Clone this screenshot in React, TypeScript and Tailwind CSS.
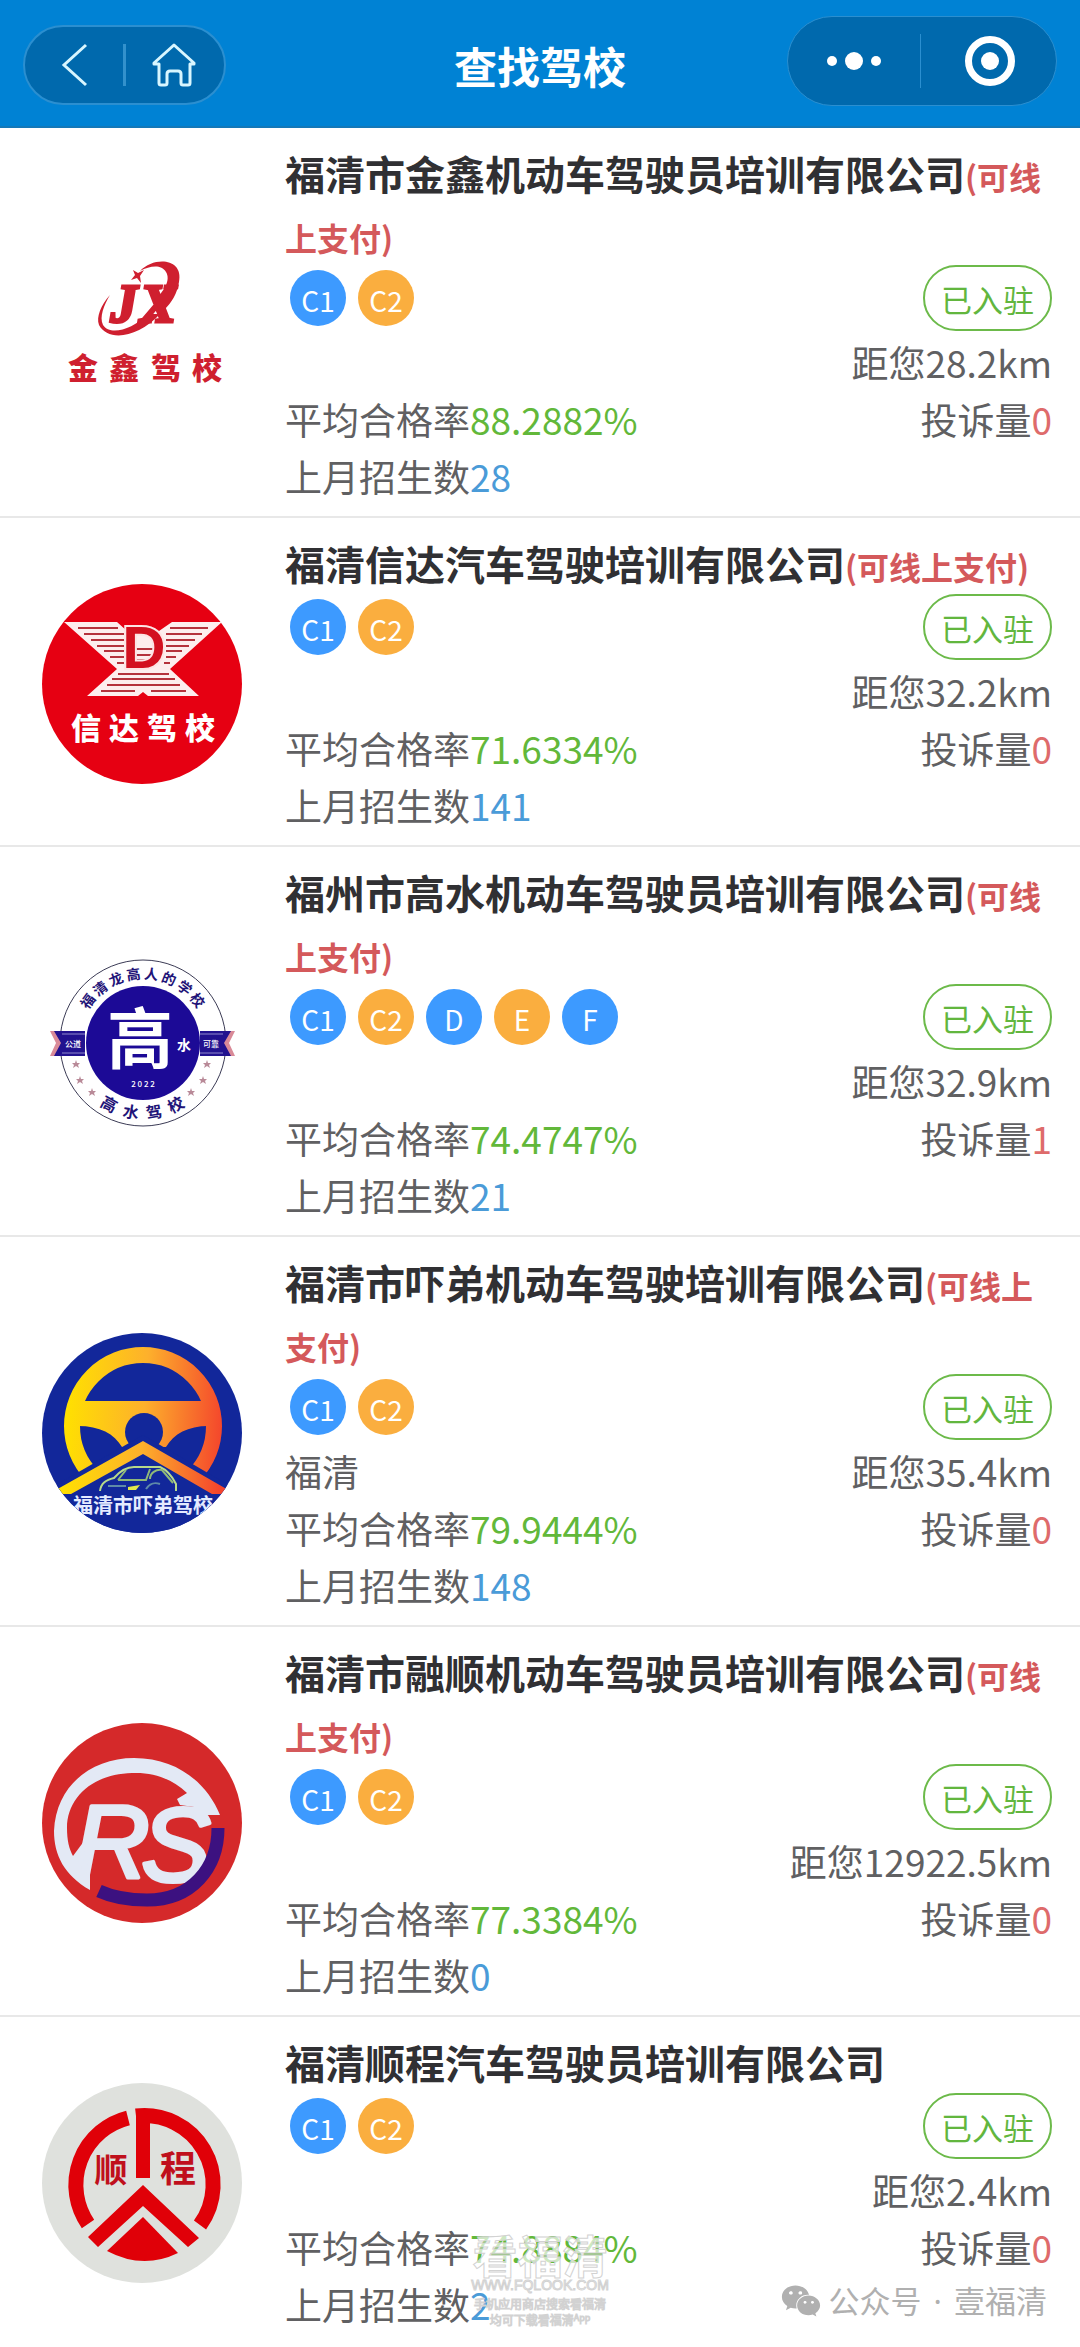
import { FaWeixin } from "react-icons/fa";

type School = {
  id: string;
  name: string;
  onlinePay: boolean;
  licences: string[];
  address: string;
  distance: string;
  passRate: string;
  complaints: number;
  enrolled: number;
  logo: () => React.JSX.Element;
};

// Logos, all drawn on a 200 x 200 canvas

function JinxinLogo() {
  return (
    <g fill="#cf1f2f" fontWeight="700" textAnchor="middle">
      <g
        fontSize="54"
        fontFamily="Liberation Serif, serif"
        fontStyle="italic"
        stroke="#cf1f2f"
        strokeWidth="3"
      >
        <text x="82" y="98">J</text>
        <text x="116" y="98">X</text>
      </g>
      <path d="M98 47C112 32 142 34 137 58C135 70 130 78 122 86L112 76C122 68 129 56 124 48C119 40 108 42 98 47Z" />
      <path d="M68 71C59 81 54 93 57 101C66 118 96 114 118 90L106 90C90 106 68 112 61 101C57 93 62 81 68 71Z" />
      <path d="M91 46L96 49L102 46L98 52L99 59L95 54L89 56L93 51Z" />
      <g fontSize="30" fontWeight="900">
        <text x="41" y="155">金</text>
        <text x="82" y="155">鑫</text>
        <text x="124" y="155">驾</text>
        <text x="165" y="155">校</text>
      </g>
    </g>
  );
}

function XindaLogo() {
  return (
    <g>
      <circle cx="100" cy="100" r="100" fill="#e60012" />
      <path
        d="M22 38H75L85 47H117L130 38H180L128 85L157 112H106L101 108L96 112H45L75 85Z"
        fill="#fdeeee"
      />
      <g stroke="#b5323c" strokeWidth="2">
        <path d="M36 44H76M42 50H82M49 56H82M55 62H82M62 67H82M68 73H82M75 79H82" />
        <path d="M128 44H166M124 50H160M124 56H153M124 62H147M124 67H140M124 73H134M122 79H128" />
        <path d="M92 65H112M92 71H112M92 76H112" />
        <path d="M76 90H127M70 95H133M65 101H138M59 107H93M109 107H144" />
      </g>
      <text
        x="102"
        y="84"
        fontSize="60"
        fontWeight="700"
        fontFamily="Liberation Sans, sans-serif"
        textAnchor="middle"
        fill="#d3101f"
        stroke="#fde4e4"
        strokeWidth="4"
        paintOrder="stroke"
      >
        D
      </text>
      <g fill="#fff" fontSize="30" fontWeight="900" textAnchor="middle">
        <text x="44" y="155">信</text>
        <text x="82" y="155">达</text>
        <text x="120" y="155">驾</text>
        <text x="158" y="155">校</text>
      </g>
    </g>
  );
}

const STARS = [
  [34, 121],
  [38, 137],
  [50, 149],
  [165, 121],
  [161, 137],
  [149, 149],
];

function GaoshuiLogo() {
  return (
    <g textAnchor="middle">
      <circle cx="101" cy="100" r="83" fill="#fff" stroke="#3b3b55" strokeWidth="1" />
      <circle cx="101" cy="100" r="57" fill="#1c0a96" />
      <path d="M8 88H20V113H8L14 100Z M193 88H181V113H193L187 100Z" fill="#d98a98" />
      <path d="M12 88H43V113H12L19 100Z M189 88H158V113H189L182 100Z" fill="#22128f" />
      <path d="M20 91H43M20 110H43M158 91H181M158 110H181" stroke="#8f88cc" />
      <g fill="#fff" fontWeight="500">
        <text x="31" y="104" fontSize="8">公道</text>
        <text x="169" y="104" fontSize="8">可靠</text>
        <text x="98" y="120" fontSize="66" fontWeight="700">高</text>
        <text x="142" y="107" fontSize="14" fontWeight="700">水</text>
        <text x="101" y="144" fontSize="8">2 0 2 2</text>
      </g>
      <g fill="#1f1478" fontSize="14" fontWeight="700">
        {[..."福清龙高人的学校"].map((char, i) => (
          <text key={i} x="101" y="36" transform={`rotate(${i * 15 - 53} 101 100)`}>
            {char}
          </text>
        ))}
      </g>
      <g fill="#1f1478" fontSize="16" fontWeight="700">
        {[..."高水驾校"].map((char, i) => (
          <text key={i} x="101" y="176" transform={`rotate(${29 - i * 19} 101 100)`}>
            {char}
          </text>
        ))}
      </g>
      {STARS.map(([x, y]) => (
        <path
          key={`${x}-${y}`}
          transform={`translate(${x} ${y})`}
          d="M0-4L1-1H4L2 1L3 4L0 2L-3 4L-2 1L-4-1H-1Z"
          fill="#b98a98"
        />
      ))}
    </g>
  );
}

function XiadiLogo() {
  return (
    <g>
      <defs>
        <linearGradient id="wheel" gradientUnits="userSpaceOnUse" x1="22" y1="90" x2="181" y2="100">
          <stop offset="0" stopColor="#ffe100" />
          <stop offset="0.5" stopColor="#fdb02c" />
          <stop offset="1" stopColor="#f4452c" />
        </linearGradient>
        <clipPath id="round">
          <circle cx="100" cy="100" r="100" />
        </clipPath>
      </defs>
      <g clipPath="url(#round)">
        <rect width="200" height="200" fill="#12279a" />
        <circle cx="101" cy="93" r="71" fill="none" stroke="url(#wheel)" strokeWidth="16" />
        <path d="M32 68H170V93C148 92 132 100 124 114H80C72 100 56 92 32 93Z" fill="url(#wheel)" />
        <circle cx="102" cy="99" r="19" fill="#12279a" />
        <path d="M101 102L-5 163V200H205V163Z" fill="#12279a" />
        <path d="M101 108L12 158L14 161H29L101 121L170 161H186L188 158Z" fill="url(#wheel)" />
        <g fill="none" stroke="#b7d98a" strokeWidth="2">
          <path d="M58 158C59 150 64 147 72 145C78 138 84 134 92 134H118C125 137 130 143 134 151V158" />
          <path d="M76 147H104L108 136M76 147L84 137M108 146C108 140 114 136 120 137L131 150" stroke="#8fb878" />
          <path d="M66 153H84M104 156C108 150 112 149 118 151" stroke="#5f8aa8" />
        </g>
        <path d="M86 154L98 152L94 157H86Z" fill="#e2e84a" />
        <text x="31" y="180" fontSize="20" fontWeight="700" fill="#e4ebff">
          福清市吓弟驾校
        </text>
      </g>
    </g>
  );
}

function RongshunLogo() {
  return (
    <g>
      <circle cx="100" cy="100" r="100" fill="#d5292a" />
      <path
        d="M48 167C22 152 12 132 12 108C14 62 50 35 92 35C135 35 165 60 178 92H156L152 88V84L138 82L135 76L145 70C130 56 112 49 90 50C50 51 25 75 25 105C25 117 27 126 31 133L48 110Z"
        fill="#e3e9f5"
      />
      <g
        fontFamily="Liberation Sans, sans-serif"
        fontStyle="italic"
        fill="#e3e9f5"
        stroke="#e3e9f5"
        strokeWidth="4"
        strokeLinejoin="round"
        textAnchor="middle"
      >
        <text x="70" y="155" fontSize="104">R</text>
        <text x="134" y="158" fontSize="104">S</text>
      </g>
      <path
        d="M176 105C176 145 150 177 105 177C86 177 70 174 57 168"
        fill="none"
        stroke="#3c1180"
        strokeWidth="13"
      />
    </g>
  );
}

function ShunchengLogo() {
  return (
    <g>
      <circle cx="100" cy="100" r="100" fill="#dfe1dd" />
      <g fill="none" stroke="#e00008" strokeWidth="15">
        <path d="M86 35A69 69 0 0 0 46 141" />
        <path d="M94 33A69 69 0 0 1 158 142" />
      </g>
      <g fill="#e00008">
        <path d="M94 26H108V95H94Z" />
        <path d="M101 102L157 155L146 164L101 123L56 164L46 154Z" />
        <path d="M101 134L136 170Q101 187 65 168Z" />
      </g>
      <g fill="#c0101c" fontWeight="700" textAnchor="middle">
        <text x="69" y="99" fontSize="33">顺</text>
        <text x="136" y="99" fontSize="36">程</text>
      </g>
    </g>
  );
}

const schools: School[] = [
  {
    id: "jinxin",
    name: "福清市金鑫机动车驾驶员培训有限公司",
    onlinePay: true,
    licences: ["C1", "C2"],
    address: "",
    distance: "28.2km",
    passRate: "88.2882%",
    complaints: 0,
    enrolled: 28,
    logo: JinxinLogo,
  },
  {
    id: "xinda",
    name: "福清信达汽车驾驶培训有限公司",
    onlinePay: true,
    licences: ["C1", "C2"],
    address: "",
    distance: "32.2km",
    passRate: "71.6334%",
    complaints: 0,
    enrolled: 141,
    logo: XindaLogo,
  },
  {
    id: "gaoshui",
    name: "福州市高水机动车驾驶员培训有限公司",
    onlinePay: true,
    licences: ["C1", "C2", "D", "E", "F"],
    address: "",
    distance: "32.9km",
    passRate: "74.4747%",
    complaints: 1,
    enrolled: 21,
    logo: GaoshuiLogo,
  },
  {
    id: "xiadi",
    name: "福清市吓弟机动车驾驶培训有限公司",
    onlinePay: true,
    licences: ["C1", "C2"],
    address: "福清",
    distance: "35.4km",
    passRate: "79.9444%",
    complaints: 0,
    enrolled: 148,
    logo: XiadiLogo,
  },
  {
    id: "rongshun",
    name: "福清市融顺机动车驾驶员培训有限公司",
    onlinePay: true,
    licences: ["C1", "C2"],
    address: "",
    distance: "12922.5km",
    passRate: "77.3384%",
    complaints: 0,
    enrolled: 0,
    logo: RongshunLogo,
  },
  {
    id: "shuncheng",
    name: "福清顺程汽车驾驶员培训有限公司",
    onlinePay: false,
    licences: ["C1", "C2"],
    address: "",
    distance: "2.4km",
    passRate: "74.8884%",
    complaints: 0,
    enrolled: 2,
    logo: ShunchengLogo,
  },
];

function Header() {
  return (
    <header className="grid h-32 grid-cols-[1fr_auto_1fr] items-start border-b-2 border-[#1478b8] bg-[#0082d4] px-[23px]">
      <div className="mt-[25px] flex h-20 w-[203px] items-center justify-between rounded-full border-2 border-[#2b8fd0] bg-[#0069ad] pr-7 pl-9">
        <button aria-label="返回">
          <svg className="h-11 w-7" viewBox="0 0 28 44" fill="none" stroke="#d8f6ff" strokeWidth="3">
            <path d="M25 2L3 22L25 42" />
          </svg>
        </button>
        <span className="ml-2 h-[42px] w-[3px] bg-[#3391cc]" />
        <button aria-label="首页">
          <svg
            className="h-11 w-11"
            viewBox="0 0 44 44"
            fill="none"
            stroke="#d8f6ff"
            strokeWidth="3"
            strokeLinejoin="round"
          >
            <path d="M22 2L2 20V21H7V40Q7 42 9 42H13Q15 42 15 40V31Q15 28 18 28H26Q29 28 29 31V40Q29 42 31 42H36Q38 42 38 40V21H42V20Z" />
          </svg>
        </button>
      </div>
      <h1 className="mt-[35px] text-[43px] leading-[60px] font-bold text-white">查找驾校</h1>
      <div className="mt-4 flex h-[90px] w-[270px] items-center justify-self-end rounded-full border border-[#2b8fd0] bg-[#0069ad]">
        <button aria-label="更多" className="flex flex-1 items-center justify-center gap-2">
          <span className="size-[10px] rounded-full bg-white" />
          <span className="size-[18px] rounded-full bg-white" />
          <span className="size-[10px] rounded-full bg-white" />
        </button>
        <span className="h-[54px] w-px bg-[#2b8fd0]" />
        <button aria-label="关闭" className="flex flex-1 items-center justify-center pl-1">
          <span className="flex size-[50px] items-center justify-center rounded-full border-[7px] border-white">
            <span className="size-[18px] rounded-full bg-white" />
          </span>
        </button>
      </div>
    </header>
  );
}

function SchoolRow({ school }: { school: School }) {
  const Logo = school.logo;

  return (
    <li className="flex items-center gap-[43px] border-b-2 border-[#e8e8e8] pt-[15px] pr-7 pb-[11px] pl-[42px] last:border-b-0">
      <svg className="size-[200px] shrink-0" viewBox="0 0 200 200" role="img" aria-label={school.name}>
        <Logo />
      </svg>
      <div className="min-w-0 flex-1">
        <h2 className="text-[40px] leading-[61px] font-bold text-[#303033]">
          {school.name}
          {school.onlinePay && (
            <span className="text-[32px] leading-none text-[#d4595b]">(可线上支付)</span>
          )}
        </h2>
        <div className="mb-[3px] flex h-[66px] items-center justify-between pl-[5px]">
          <div className="flex gap-3">
            {school.licences.map((licence, i) => (
              <span
                key={licence}
                className={`flex size-14 items-center justify-center rounded-full pt-1 text-[28px] leading-none text-white ${
                  i % 2 === 0 ? "bg-[#3d9aff]" : "bg-[#faae3f]"
                }`}
              >
                {licence}
              </span>
            ))}
          </div>
          <span className="flex h-[66px] items-center rounded-full border-2 border-[#6cba4a] px-4 text-[31px] leading-none text-[#62b63e]">
            已入驻
          </span>
        </div>
        <div className="text-[37px] leading-[57px] text-[#606062]">
          <div className="flex justify-between">
            <span>{school.address}</span>
            <span>距您{school.distance}</span>
          </div>
          <div className="flex justify-between">
            <span>
              平均合格率<span className="text-[#62b83a]">{school.passRate}</span>
            </span>
            <span>
              投诉量<span className="text-[#de6b6b]">{school.complaints}</span>
            </span>
          </div>
          <div>
            上月招生数<span className="text-[#4a9bd8]">{school.enrolled}</span>
          </div>
        </div>
      </div>
    </li>
  );
}

export default function App() {
  return (
    <div className="relative overflow-hidden bg-white font-['Noto_Sans_CJK_SC',sans-serif]">
      <Header />
      <ul>
        {schools.map((school) => (
          <SchoolRow key={school.id} school={school} />
        ))}
      </ul>

      {/* Watermarks over the last row */}
      <div className="pointer-events-none absolute bottom-4 left-1/2 flex -translate-x-1/2 flex-col items-center text-center whitespace-nowrap text-white/70 [-webkit-text-stroke:1px_#d2d2d2]">
        <span className="text-[45px] leading-[46px] font-bold">看福清</span>
        <span className="font-['Liberation_Sans',sans-serif] text-[14px] leading-[14px]">WWW.FQLOOK.COM</span>
        <span className="mt-1 text-[12px] leading-4">手机应用商店搜索看福清</span>
        <span className="text-[12px] leading-4">
          均可下载看福清<sup>App</sup>
        </span>
      </div>
      <div className="absolute right-[33px] bottom-5 flex items-center gap-2 text-[31px] leading-[46px] text-[#b0b0b0]">
        <FaWeixin className="size-10" />
        <span>
          公众号<span className="px-1 font-['Noto_Sans',sans-serif]"> · </span>壹福清
        </span>
      </div>
    </div>
  );
}
